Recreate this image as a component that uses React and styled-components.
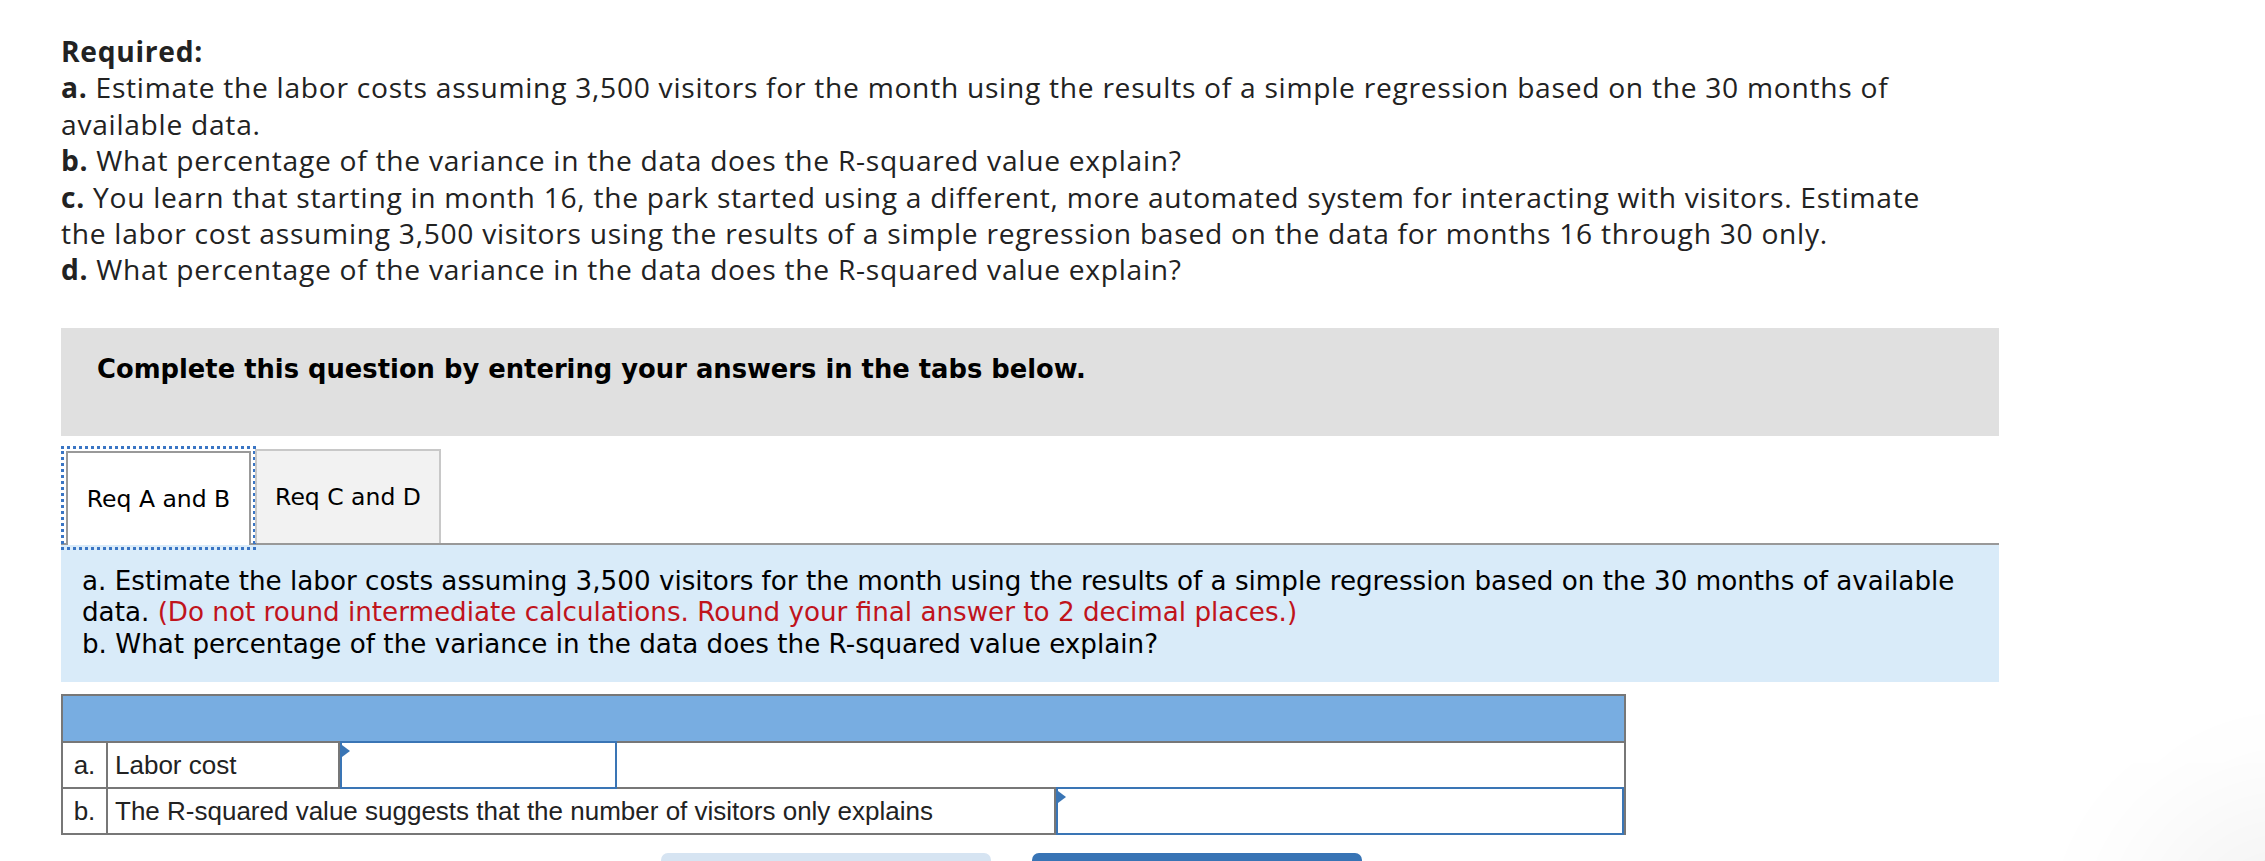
import React from "react";
import styled, { createGlobalStyle } from "styled-components";

const GlobalStyle = createGlobalStyle`
  html, body {
    margin: 0;
    padding: 0;
    background: #fff;
  }
  body {
    font-family: "Open Sans", "Liberation Sans", sans-serif;
    color: #222;
    overflow: hidden;
  }
`;

const Page = styled.div`
  position: relative;
  width: 2265px;
  height: 861px;
  overflow: hidden;
  padding: 33px 0 0 61px;
  box-sizing: border-box;
`;

const Required = styled.div`
  width: 1938px;
  font-family: "Open Sans", sans-serif;
  font-size: 28.2px;
  line-height: 36.4px;
  letter-spacing: 0.72px;
  color: #222;
  white-space: nowrap;
`;

const Label = styled.b`
  font-weight: 700;
`;

const Instruction = styled.div`
  width: 1938px;
  height: 108px;
  margin-top: 40px;
  background: #e0e0e0;
  box-sizing: border-box;
  padding: 25px 0 0 36px;
  font-family: "DejaVu Sans", Verdana, sans-serif;
  font-weight: 700;
  font-size: 25.8px;
  line-height: 32px;
  color: #000;
`;

const TabRow = styled.div`
  display: flex;
  align-items: flex-end;
  width: 1938px;
  margin-top: 13px;
  border-bottom: 2px solid #999;
`;

const Tab = styled.div`
  display: flex;
  align-items: center;
  justify-content: center;
  width: ${(p) => (p.$active ? "185px" : "186px")};
  height: 94px;
  box-sizing: border-box;
  margin-left: ${(p) => (p.$active ? "5px" : "4px")};
  font-family: "DejaVu Sans", Verdana, sans-serif;
  font-size: 23.5px;
  color: #000;
  white-space: nowrap;
  background: ${(p) => (p.$active ? "#fff" : "#f2f2f2")};
  border: 2px solid ${(p) => (p.$active ? "#999" : "#c8c8c8")};
  border-bottom: none;
  margin-bottom: ${(p) => (p.$active ? "-2px" : "0")};
  outline: ${(p) => (p.$active ? "3px dotted #3a75c4" : "none")};
  outline-offset: 2px;
`;

const Panel = styled.div`
  width: 1938px;
  box-sizing: border-box;
  background: #d9ebf9;
  padding: 21px 21px 22px;
  font-family: "DejaVu Sans", Verdana, sans-serif;
  font-size: 26.2px;
  line-height: 31.5px;
  color: #000;
  white-space: nowrap;
`;

const Red = styled.span`
  color: #c0141c;
`;

const Table = styled.div`
  width: 1565px;
  margin-top: 12px;
  border: 2px solid #777;
  box-sizing: border-box;
  font-family: "Liberation Sans", Arial, sans-serif;
  font-size: 26px;
  color: #222;
`;

const HeaderRow = styled.div`
  height: 45px;
  background: #78ade1;
  border-bottom: 2px solid #777;
`;

const Row = styled.div`
  display: grid;
  grid-template-columns: ${(p) => p.$cols};
  height: 44px;
  border-bottom: ${(p) => (p.$last ? "none" : "2px solid #777")};
`;

const Cell = styled.div`
  display: flex;
  align-items: center;
  justify-content: ${(p) => (p.$center ? "center" : "flex-start")};
  padding-left: ${(p) => (p.$center ? "0" : "7px")};
  border-right: ${(p) => (p.$noBorder ? "none" : "2px solid #777")};
  white-space: nowrap;
`;

const InputBox = styled.div`
  position: relative;
  margin: -2px ${(p) => (p.$edge ? "0" : "-2px")} -2px 0;
  border: 2px solid #3a75b5;
  background: #fff;
  &::before {
    content: "";
    position: absolute;
    left: 0;
    top: 2px;
    border-top: 6px solid transparent;
    border-bottom: 6px solid transparent;
    border-left: 8px solid #3a75b5;
  }
`;

const Buttons = styled.div`
  display: flex;
  gap: 41px;
  margin: 18px 0 0 600px;
`;

const Button = styled.div`
  width: 330px;
  height: 40px;
  border-radius: 7px;
  background: ${(p) => (p.$primary ? "#3874b5" : "#d6e4f2")};
`;

const Floating = styled.div`
  position: absolute;
  left: 2185px;
  top: 856px;
  width: 220px;
  height: 220px;
  border-radius: 50%;
  background: #fff;
  border: 1px solid #e4e4e4;
  box-shadow: 0 0 160px 40px rgba(0, 0, 0, 0.07);
`;

export default function App() {
  return (
    <>
      <GlobalStyle />
      <Page>
        <Required>
          <Label>Required:</Label>
          <br />
          <Label>a.</Label> Estimate the labor costs assuming 3,500 visitors for the month using the results of a simple regression based on the 30 months of
          <br />
          available data.
          <br />
          <Label>b.</Label> What percentage of the variance in the data does the R-squared value explain?
          <br />
          <Label>c.</Label> You learn that starting in month 16, the park started using a different, more automated system for interacting with visitors. Estimate
          <br />
          the labor cost assuming 3,500 visitors using the results of a simple regression based on the data for months 16 through 30 only.
          <br />
          <Label>d.</Label> What percentage of the variance in the data does the R-squared value explain?
        </Required>

        <Instruction>Complete this question by entering your answers in the tabs below.</Instruction>

        <TabRow>
          <Tab $active>Req A and B</Tab>
          <Tab>Req C and D</Tab>
        </TabRow>

        <Panel>
          a. Estimate the labor costs assuming 3,500 visitors for the month using the results of a simple regression based on the 30 months of available
          <br />
          data. <Red>(Do not round intermediate calculations. Round your final answer to 2 decimal places.)</Red>
          <br />
          b. What percentage of the variance in the data does the R-squared value explain?
        </Panel>

        <Table>
          <HeaderRow />
          <Row $cols="45px 232px 275px 1fr">
            <Cell $center>a.</Cell>
            <Cell>Labor cost</Cell>
            <InputBox />
            <Cell $noBorder />
          </Row>
          <Row $cols="45px 948px 1fr" $last>
            <Cell $center>b.</Cell>
            <Cell>The R-squared value suggests that the number of visitors only explains</Cell>
            <InputBox $edge />
          </Row>
        </Table>

        <Buttons>
          <Button />
          <Button $primary />
        </Buttons>
        <Floating />
      </Page>
    </>
  );
}
